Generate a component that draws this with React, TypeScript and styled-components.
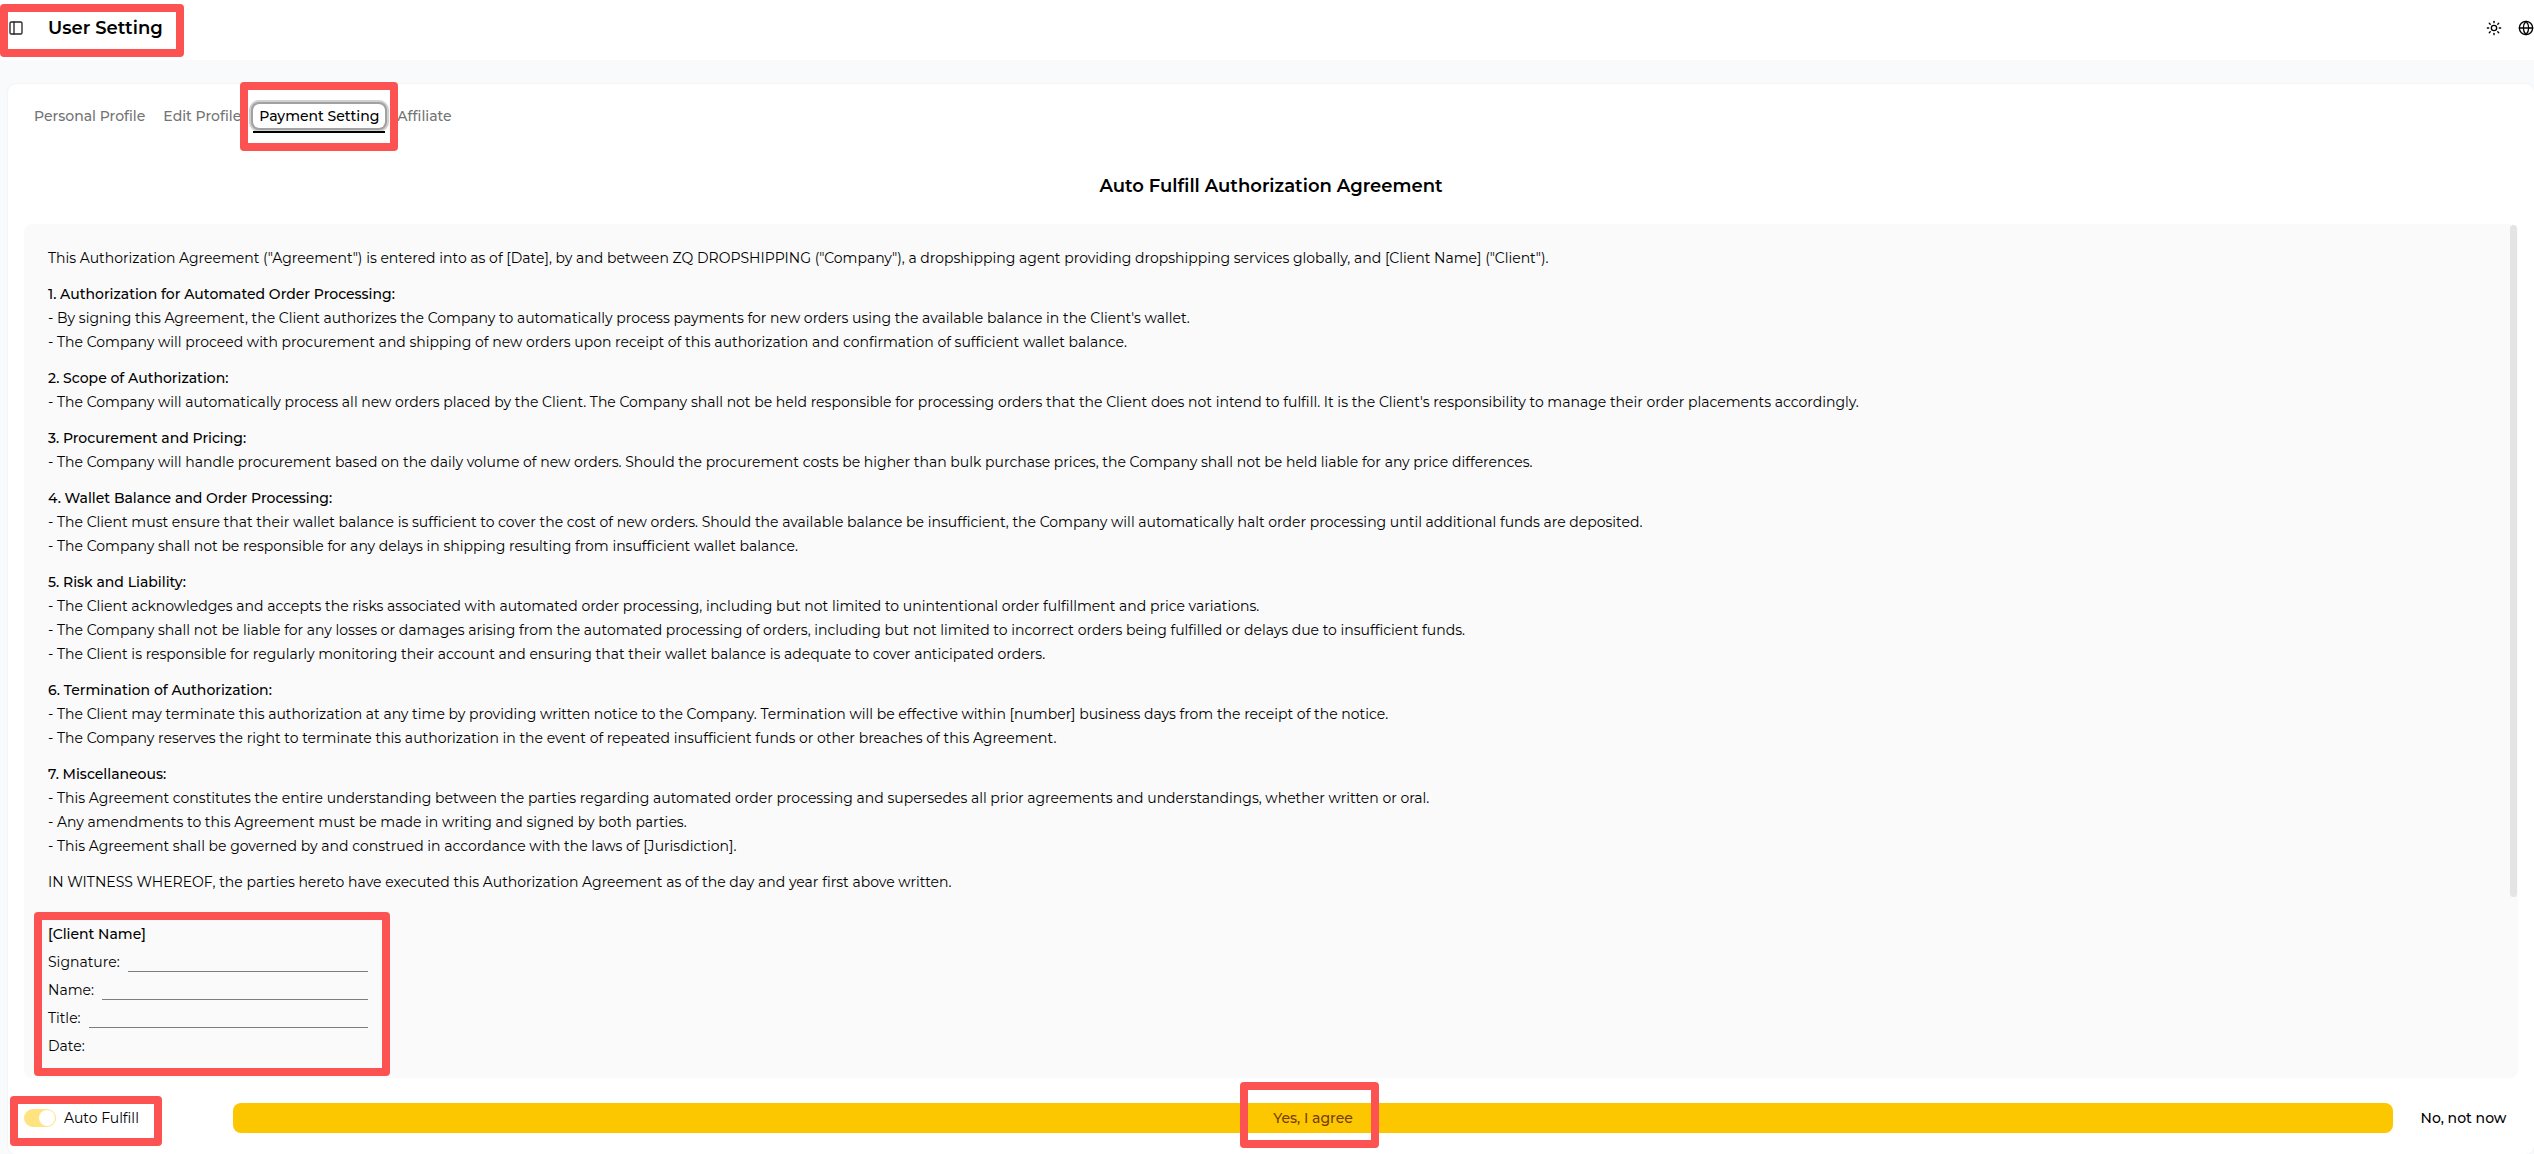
import React from "react";
import styled, { createGlobalStyle, css } from "styled-components";
import { Globe, PanelLeft, Sun } from "lucide-react";

const GlobalStyle = createGlobalStyle`
  *, *::before, *::after { box-sizing: border-box; }
  body {
    margin: 0;
    background: #f8fafc;
    color: #000;
    font-family: Montserrat, "Open Sans", "Noto Sans", sans-serif;
    font-size: 14px;
    line-height: 24px;
    overflow-x: hidden;
  }
  h1, h2, h3, p { margin: 0; }
  button, input { font: inherit; color: inherit; }
`;

const Page = styled.div`
  display: flex;
  flex-direction: column;
  gap: 24px;
  min-height: 100vh;
`;

const Header = styled.header`
  display: flex;
  align-items: center;
  justify-content: space-between;
  height: 60px;
  padding-bottom: 4px;
  background: #fff;
`;

const HeaderTitle = styled.div`
  position: relative;
  display: flex;
  align-items: center;
  gap: 24px;
  padding-left: 8px;
`;

const HeaderActions = styled.div`
  display: flex;
  align-items: center;
  gap: 16px;
`;

const IconButton = styled.button`
  display: flex;
  padding: 0;
  border: 0;
  background: none;
`;

const Title = styled.h1`
  font-size: 18px;
  font-weight: 600;
`;

const Card = styled.main`
  flex: 1;
  margin-left: 8px;
  padding: 16px;
  border-radius: 8px;
  background: #fff;
  box-shadow: 0 0 2px rgba(0, 0, 0, 0.08);
`;

const Tabs = styled.nav`
  display: flex;
  gap: 6px;
  padding: 4px 4px 0;
`;

const TabSlot = styled.div`
  position: relative;
`;

const Tab = styled.button<{ $active?: boolean }>`
  display: block;
  padding: 0 6px;
  border: 0;
  border-radius: 6px;
  background: none;
  color: #737373;
  font-weight: 500;
  ${(p) =>
    p.$active &&
    css`
      color: #000;
      box-shadow: 0 0 0 2px #a1a1a1, 0 0 0 4px #d0d0d0;

      &::after {
        content: "";
        position: absolute;
        top: 27px;
        left: 0;
        right: 0;
        height: 2px;
        background: #000;
      }
    `}
`;

const AgreementTitle = styled.h2`
  padding: 46px 0 26px;
  font-size: 18px;
  font-weight: 600;
  line-height: 24px;
  text-align: center;
`;

const Agreement = styled.div`
  position: relative;
  display: flex;
  flex-direction: column;
  gap: 12px;
  padding: 22px 24px 20px;
  border-radius: 8px;
  background: #fafafa;
`;

const ScrollThumb = styled.div`
  position: absolute;
  top: 1px;
  right: 1px;
  width: 7px;
  height: calc(100% - 182px);
  border-radius: 4px;
  background: #e4e4e7;
`;

const ClauseTitle = styled.h3`
  font-size: 14px;
  font-weight: 500;
`;

const SignatureBlock = styled.section`
  position: relative;
  display: flex;
  flex-direction: column;
  gap: 4px;
  width: 320px;
  margin-top: 16px;
`;

const Field = styled.div`
  display: flex;
  align-items: center;
  gap: 8px;
  height: 24px;
`;

const FieldInput = styled.input<{ $plain?: boolean }>`
  flex: 1;
  min-width: 0;
  height: 20px;
  padding: 0;
  border: 0;
  border-bottom: 1px solid ${(p) => (p.$plain ? "transparent" : "#7d7d7d")};
  background: none;
`;

const Footer = styled.footer`
  display: grid;
  grid-template-columns: 193px 1fr 109px;
  gap: 16px;
  align-items: center;
  padding-top: 25px;
`;

const SwitchLabel = styled.label`
  position: relative;
  display: flex;
  align-items: center;
  gap: 8px;
  width: max-content;
`;

const Switch = styled.input`
  appearance: none;
  display: flex;
  align-items: center;
  justify-content: flex-end;
  width: 32px;
  height: 18px;
  margin: 0;
  padding: 1px;
  border-radius: 9px;
  background: #fee380;

  &::before {
    content: "";
    width: 16px;
    height: 16px;
    border-radius: 50%;
    background: #fff;
  }
`;

const ActionButton = styled.button<{ $primary?: boolean }>`
  position: relative;
  height: 30px;
  padding: 0 8px;
  border: 0;
  border-radius: 8px;
  background: ${(p) => (p.$primary ? "#fdc700" : "none")};
  color: ${(p) => (p.$primary ? "#733e0a" : "#000")};
  font-weight: 500;
  white-space: nowrap;
`;

const ButtonText = styled.span`
  position: relative;
  display: inline-block;
`;

const Marker = styled.span<{ $top: number; $right: number; $bottom: number; $left: number }>`
  position: absolute;
  z-index: 2;
  top: ${(p) => -p.$top}px;
  right: ${(p) => -p.$right}px;
  bottom: ${(p) => -p.$bottom}px;
  left: ${(p) => -p.$left}px;
  border: 8px solid #fc5252;
  border-radius: 4px;
  pointer-events: none;
`;

const clauses: { title: string; lines: string[] }[] = [
  {
    title: "1. Authorization for Automated Order Processing:",
    lines: [
      "- By signing this Agreement, the Client authorizes the Company to automatically process payments for new orders using the available balance in the Client's wallet.",
      "- The Company will proceed with procurement and shipping of new orders upon receipt of this authorization and confirmation of sufficient wallet balance.",
    ],
  },
  {
    title: "2. Scope of Authorization:",
    lines: [
      "- The Company will automatically process all new orders placed by the Client. The Company shall not be held responsible for processing orders that the Client does not intend to fulfill. It is the Client's responsibility to manage their order placements accordingly.",
    ],
  },
  {
    title: "3. Procurement and Pricing:",
    lines: [
      "- The Company will handle procurement based on the daily volume of new orders. Should the procurement costs be higher than bulk purchase prices, the Company shall not be held liable for any price differences.",
    ],
  },
  {
    title: "4. Wallet Balance and Order Processing:",
    lines: [
      "- The Client must ensure that their wallet balance is sufficient to cover the cost of new orders. Should the available balance be insufficient, the Company will automatically halt order processing until additional funds are deposited.",
      "- The Company shall not be responsible for any delays in shipping resulting from insufficient wallet balance.",
    ],
  },
  {
    title: "5. Risk and Liability:",
    lines: [
      "- The Client acknowledges and accepts the risks associated with automated order processing, including but not limited to unintentional order fulfillment and price variations.",
      "- The Company shall not be liable for any losses or damages arising from the automated processing of orders, including but not limited to incorrect orders being fulfilled or delays due to insufficient funds.",
      "- The Client is responsible for regularly monitoring their account and ensuring that their wallet balance is adequate to cover anticipated orders.",
    ],
  },
  {
    title: "6. Termination of Authorization:",
    lines: [
      "- The Client may terminate this authorization at any time by providing written notice to the Company. Termination will be effective within [number] business days from the receipt of the notice.",
      "- The Company reserves the right to terminate this authorization in the event of repeated insufficient funds or other breaches of this Agreement.",
    ],
  },
  {
    title: "7. Miscellaneous:",
    lines: [
      "- This Agreement constitutes the entire understanding between the parties regarding automated order processing and supersedes all prior agreements and understandings, whether written or oral.",
      "- Any amendments to this Agreement must be made in writing and signed by both parties.",
      "- This Agreement shall be governed by and construed in accordance with the laws of [Jurisdiction].",
    ],
  },
];

const tabs = ["Personal Profile", "Edit Profile", "Payment Setting", "Affiliate"];
const fields = ["Signature", "Name", "Title", "Date"];

export default function App() {
  const [active, setActive] = React.useState("Payment Setting");
  const [auto, setAuto] = React.useState(true);

  return (
    <>
      <GlobalStyle />
      <Page>
        <Header>
          <HeaderTitle>
            <IconButton aria-label="Toggle sidebar">
              <PanelLeft size={16} strokeWidth={2} color="#262626" />
            </IconButton>
            <Title>User Setting</Title>
            <Marker $top={12} $right={21} $bottom={17} $left={0} />
          </HeaderTitle>
          <HeaderActions>
            <IconButton aria-label="Switch theme">
              <Sun size={16} />
            </IconButton>
            <IconButton aria-label="Language">
              <Globe size={16} />
            </IconButton>
          </HeaderActions>
        </Header>
        <Card>
          <Tabs>
            {tabs.map((name) => (
              <TabSlot key={name}>
                <Tab $active={name === active} onClick={() => setActive(name)}>
                  {name}
                </Tab>
                {name === "Payment Setting" && <Marker $top={22} $right={13} $bottom={23} $left={13} />}
              </TabSlot>
            ))}
          </Tabs>
          <AgreementTitle>Auto Fulfill Authorization Agreement</AgreementTitle>
          <Agreement>
            <p>
              This Authorization Agreement ("Agreement") is entered into as of [Date], by and between ZQ DROPSHIPPING
              ("Company"), a dropshipping agent providing dropshipping services globally, and [Client Name] ("Client").
            </p>
            {clauses.map((clause) => (
              <section key={clause.title}>
                <ClauseTitle>{clause.title}</ClauseTitle>
                {clause.lines.map((line) => (
                  <p key={line}>{line}</p>
                ))}
              </section>
            ))}
            <p>
              IN WITNESS WHEREOF, the parties hereto have executed this Authorization Agreement as of the day and year
              first above written.
            </p>
            <SignatureBlock>
              <ClauseTitle>[Client Name]</ClauseTitle>
              {fields.map((name) => (
                <Field key={name}>
                  <label htmlFor={name}>{name}:</label>
                  <FieldInput id={name} $plain={name === "Date"} />
                </Field>
              ))}
              <Marker $top={10} $right={22} $bottom={18} $left={14} />
            </SignatureBlock>
            <ScrollThumb />
          </Agreement>
          <Footer>
            <SwitchLabel>
              <Switch type="checkbox" role="switch" checked={auto} onChange={() => setAuto(!auto)} />
              Auto Fulfill
              <Marker $top={10} $right={23} $bottom={16} $left={14} />
            </SwitchLabel>
            <ActionButton $primary>
              <ButtonText>
                Yes, I agree
                <Marker $top={24} $right={26} $bottom={18} $left={33} />
              </ButtonText>
            </ActionButton>
            <ActionButton>No, not now</ActionButton>
          </Footer>
        </Card>
      </Page>
    </>
  );
}
